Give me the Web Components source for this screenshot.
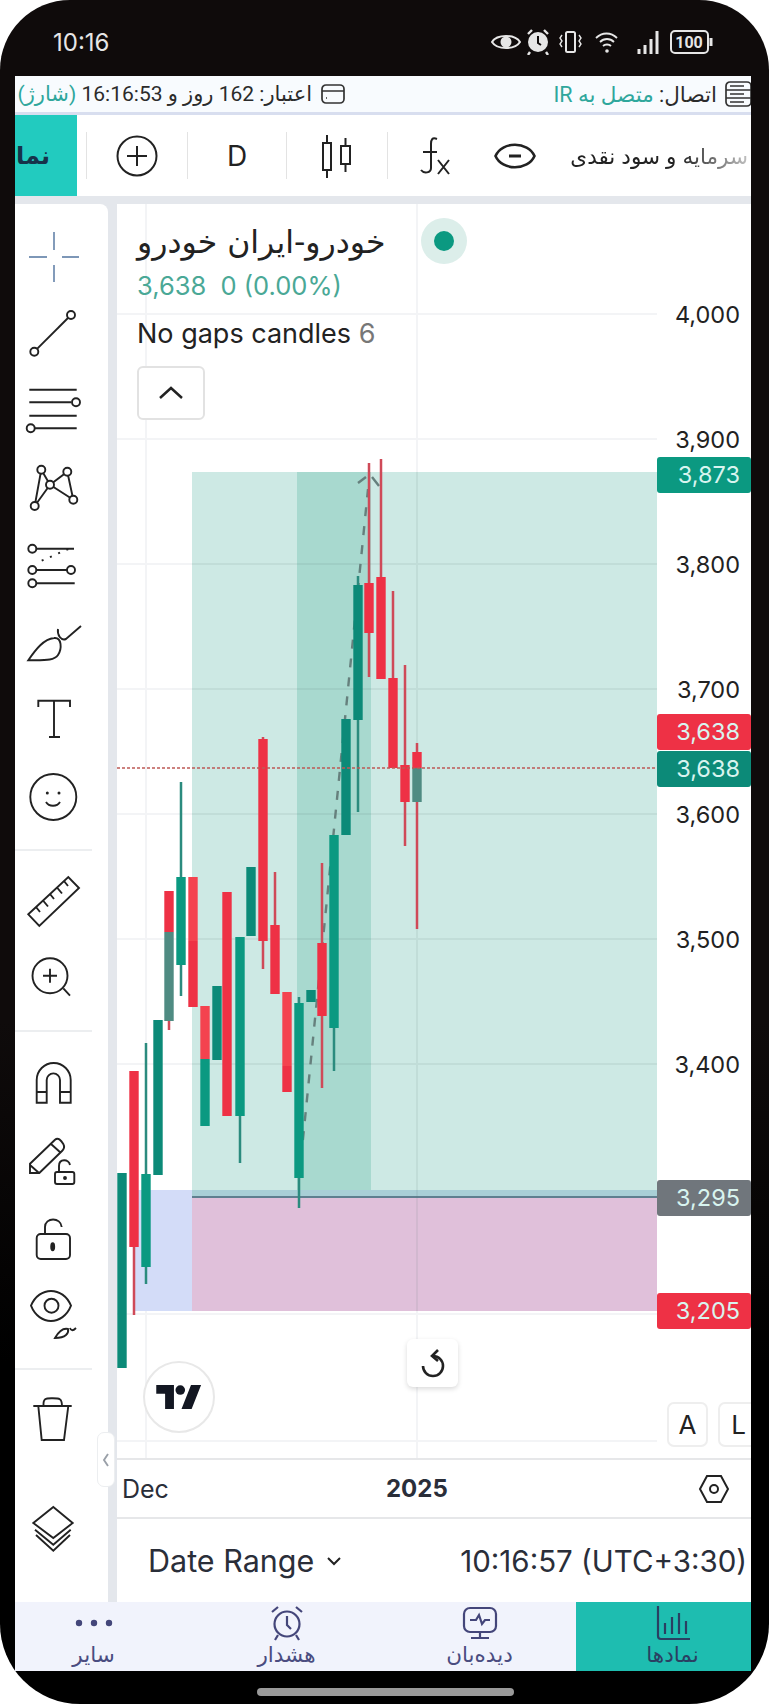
<!DOCTYPE html>
<html lang="fa">
<head>
<meta charset="utf-8">
<title>Chart</title>
<style>
	html, body { margin: 0; padding: 0; background: #fff; }
</style>
</head>
<body>
<phone-frame>
	<app-status></app-status>
	<app-toolbar></app-toolbar>
	<div style="display:flex;background:#e4e7ec;padding-top:8px;height:1406px;box-sizing:border-box">
		<draw-toolbar></draw-toolbar>
		<div style="display:flex;flex-direction:column;width:634px;margin-left:9px;background:#fff">
			<chart-pane></chart-pane>
			<time-axis></time-axis>
			<range-bar></range-bar>
		</div>
	</div>
	<bottom-nav></bottom-nav>
</phone-frame>

<script>
(function(customElements) {

	'use strict';

	const FA = '"Inter", "DejaVu Sans", sans-serif';

	class Base extends HTMLElement {
		render(html) {
			this.attachShadow({mode: 'open'}).innerHTML = html;
		}
	}

	class PhoneFrame extends Base {
		connectedCallback() {
			this.render(`
			<style>
				:host { display: block; width: 769px; height: 1704px; background: #fff; font-family: ${FA}; }
				.case { height: 100%; background: linear-gradient(#0f0b0b, #0f0b0b 60%, #000 80%); border-radius: 70px 70px 80px 80px; display: flex; flex-direction: column; overflow: hidden; }
				.top { height: 76px; flex: none; display: flex; align-items: center; justify-content: space-between; padding: 8px 54px 0 53px; box-sizing: border-box; color: #e6e6e6; font-size: 24px; }
				.icons { display: block; }
				.screen { width: 736px; height: 1595px; flex: none; margin-left: 15px; overflow: hidden; background: #fff; position: relative; }
				.bottom { flex: 1; display: flex; align-items: center; justify-content: center; }
				.pill { width: 257px; height: 8px; border-radius: 4px; background: #9a9a9a; margin-top: 9px; margin-left: 2px; }
			</style>
			<div class="case">
				<div class="top">
					<span>10:16</span>
					<svg class="icons" width="224" height="26" viewBox="0 0 224 26" fill="none" stroke="#e6e6e6" stroke-width="2">
						<path d="M1 13C6 5 24 5 29 13C24 21 6 21 1 13Z"/><circle cx="15" cy="13" r="4.5" fill="#e6e6e6"/>
						<circle cx="47" cy="13" r="10" fill="#e6e6e6" stroke="none"/><path d="M47 7v7l3 2" stroke="#0f0b0b" stroke-width="2"/><path d="M37 5l4-4M57 5l-4-4M39 23l-2 3M55 23l2 3" stroke-width="2.400"/>
						<rect x="75" y="3" width="9" height="20" rx="1.5"/><path d="M71 6l-2 3 2 3-2 3 2 3M88 6l2 3-2 3 2 3-2 3" stroke-width="1.4"/>
						<path d="M105 9c6-6 15-6 21 0M109 13c4-4 10-4 14 0M112 17c2-2 6-2 8 0" stroke-width="1.8"/><circle cx="116" cy="22" r="1.8" fill="#e6e6e6" stroke="none"/>
						<path d="M148 25v-5M154 25v-9M160 25v-15M166 25V2" stroke-width="3"/>
						<rect x="180" y="2" width="37" height="22" rx="4"/><path d="M220 9v8" stroke-width="3"/>
						<text x="198" y="19" text-anchor="middle" font-family="Roboto, sans-serif" font-size="16" font-weight="700" fill="#e6e6e6" stroke="none">100</text>
					</svg>
				</div>
				<div class="screen"><slot></slot></div>
				<div class="bottom"><div class="pill"></div></div>
			</div>`);
		}
	}

	class AppStatus extends Base {
		connectedCallback() {
			this.render(`
			<style>
				:host { display: flex; justify-content: space-between; height: 39px; box-sizing: border-box; background: #f8fbfe; border-bottom: 3px solid #d8deef; color: #2b2b2b; font-size: 21px; font-family: "Roboto", "DejaVu Sans", sans-serif; align-items: center; white-space: nowrap; }
				.left { display: flex; align-items: center; justify-content: flex-end; gap: 8px; width: 331px; overflow: hidden; }
				.right { display: flex; align-items: center; gap: 8px; }
				.t { color: #2fa79c; }
				svg { flex: none; }
			</style>
			<div class="left">
				<span dir="rtl">اعتبار: 162 روز و 16:16:53 <span class="t">(شارژ)</span></span>
				<svg width="26" height="22" viewBox="0 0 26 22" fill="none" stroke="#333" stroke-width="1.7"><rect x="2" y="2" width="22" height="18" rx="4"/><path d="M2 8h22M6 15h1"/></svg>
			</div>
			<div class="right">
				<span dir="rtl" style="font-size:21.500px">اتصال: <span class="t">متصل به IR</span></span>
				<svg width="26" height="28" viewBox="0 0 26 28" fill="none" stroke="#333" stroke-width="1.7"><rect x="1" y="2" width="25" height="24" rx="4"/><path d="M1 10h25M1 18h25M5 6h14M5 14h14M5 22h14"/></svg>
			</div>`);
		}
	}

	class AppToolbar extends Base {
		connectedCallback() {
			this.render(`
			<style>
				:host { display: flex; height: 81px; background: #fff; align-items: center; color: #222; }
				.sym { width: 62px; height: 100%; background: #22cbbf; overflow: hidden; display: flex; align-items: center; justify-content: flex-end; font-size: 24px; font-weight: 700; color: #16324a; white-space: nowrap; margin-right: 9px; padding-right: 27px; box-sizing: border-box; }
				.sym span { flex: none; }
				.cell { display: flex; align-items: center; justify-content: center; height: 47px; flex: none; }
				.sep { border-left: 1.5px solid #e3e3e3; }
				.d { font-size: 28px; }
				.txt { flex: 1; min-width: 0; overflow: hidden; font-size: 21.500px; white-space: nowrap; display: flex; justify-content: flex-end; -webkit-mask-image: linear-gradient(to left, rgba(0,0,0,.25) 0, #000 70px); mask-image: linear-gradient(to left, rgba(0,0,0,.25) 0, #000 70px); padding-right: 3px; }
			</style>
			<div class="sym"><span dir="rtl">نماد</span></div>
			<div class="cell sep" style="width:100px"><svg width="42" height="42" viewBox="0 0 42 42" fill="none" stroke="#222" stroke-width="2"><circle cx="21" cy="21" r="19.5"/><path d="M21 11v20M11 21h20"/></svg></div>
			<div class="cell sep d" style="width:98px">D</div>
			<div class="cell sep" style="width:100px"><svg width="32" height="44" viewBox="0 0 32 44" fill="none" stroke="#222" stroke-width="2"><rect x="2" y="9" width="8" height="27"/><path d="M6 1v8M6 36v8"/><rect x="20" y="12" width="9" height="18"/><path d="M24.500 4v8M24.500 30v8"/></svg></div>
			<div class="cell sep" style="width:96px"><svg width="32" height="40" viewBox="0 0 32 40" fill="none" stroke="#222" stroke-width="2"><path d="M17 3c-5-2-6 1-6 5v24c0 5-7 6-10 2M3 16h14"/><path d="M18 24l11 14M29 24L18 38"/></svg></div>
			<div class="cell" style="width:62px"><svg width="42" height="28" viewBox="0 0 42 28" fill="none" stroke="#222" stroke-width="2.600"><path d="M1.500 14C8 -1 34 -1 40.500 14C34 29 8 29 1.500 14Z"/><path d="M15 14h12" stroke-width="3"/></svg></div>
			<div class="txt"><span dir="rtl">سرمایه و سود نقدی</span></div>`);
		}
	}

	const dot = (x, y, r) => `<circle cx="${x}" cy="${y}" r="${r || 4}" fill="#fff"/>`;
	const ICONS = {
		cross: `<path stroke="#7d97b7" d="M5 30h18M38 30h17M30 5v18M30 38v17"/>`,
		line: `<path d="M10.300 48.700L47 12"/>${dot(10.3, 48.7)}${dot(47, 12)}`,
		par: `<path d="M5.300 10.700h47.400M5.300 23.300h42M5.300 36.700h47.400M11 49.300h41.700"/>${dot(52, 23.3)}${dot(6.7, 49.3)}`,
		pat: `<path d="M17.300 12.700L10.700 49M17.300 12.700L26 27.700L10.700 49M26 27.700L43.300 14.700L49.300 42.700L26 27.700"/>${dot(17.3, 12.7)}${dot(43.3, 14.7)}${dot(26, 27.7)}${dot(49.3, 42.7)}${dot(10.7, 49)}`,
		fib: `<path d="M8.300 13.700H50M8.300 35H47M8.300 48.300H50.700"/><path stroke-dasharray="2 7" d="M17.700 25.700L46 13.300"/>${dot(8.3, 13.7)}${dot(8.3, 35)}${dot(47, 35)}${dot(8.3, 48.3)}`,
		brush: `<path d="M4.300 47.300C12 36 20 26 30 25C38 24 38 36 34 42C30 48 20 47 4.300 47.300Z"/><path d="M34 16C33 22 37 28 42 26L57 13"/>`,
		text: `<path d="M14.300 19V12.700H46V19M30 12.700V49M25 49H36"/>`,
		smile: `<circle cx="29.300" cy="30" r="23"/><path d="M22 35c3 5 11 5 14 0"/><circle cx="23.300" cy="26" r="1.500" fill="#222" stroke="none"/><circle cx="35" cy="26" r="1.500" fill="#222" stroke="none"/>`,
		ruler: `<path d="M4.300 42.300L44.300 5L55 16L15.300 54Z"/><path d="M12 35l4 5M19 28.500l5 6M26 22l4 5M33 15.500l5 6M40 9l4 5"/>`,
		zoom: `<circle cx="26" cy="30.700" r="17.500"/><path d="M39.300 43.300L46 50.700M19 30.700h14M26 23.700v14"/>`,
		magnet: `<path d="M12.700 50.700V28A17 17 0 0 1 46.700 28V50.700H36V28A6.600 6.600 0 0 0 22.700 28V50.700ZM12.700 40H22.700M36 40H46.700"/>`,
		pen: `<path d="M6 31.700L31 7.700C34 5 37 8 39.300 12C41 15 40 17 38 19L15.300 41H6ZM6 33l9 8M27 12l10 9"/><rect x="31" y="40" width="19.300" height="12" rx="2"/><path d="M35 40V34C35 26 45 27 46 33"/><circle cx="41" cy="46" r="1" fill="#222"/>`,
		lock: `<rect x="12.700" y="24" width="33.300" height="25" rx="4"/><path d="M21 24V17C21 7 37 7 37.700 17"/><ellipse cx="28.700" cy="36.700" rx="1.500" ry="3.500" fill="#222"/>`,
		eye: `<path d="M7 20.700C15 1 39 1 47 20.700C39 41 15 41 7 20.700Z"/><circle cx="27.500" cy="20.700" r="7"/><path d="M31 53C35 46 40 43 44 44C45 48 42 53 31 53ZM46 43C47 46 49 46 52 43"/>`,
		trash: `<path d="M9.300 16H47.700M14.300 16L17.700 50H40L44.300 16M19.500 16C19 8 22 8.300 28 8.300C35 8.300 38 8 38 16"/>`,
		layers: `<path d="M29.300 9L48.700 25L29.300 40L9.300 25ZM11 31.700L29.300 46.700L46.700 31.700M12 37L29.300 52.700L46 37"/>`
	};

	class DrawToolbar extends Base {
		connectedCallback() {
			// [icon, row height] or [separator margin top, margin bottom]
			const rows = [
				['cross', 76], ['line', 76], ['par', 76], ['pat', 80], ['fib', 76], ['brush', 80], ['text', 70], ['smile', 88], [8, 13],
				['ruler', 76], ['zoom', 70], [20, 14],
				['magnet', 72], ['pen', 88], ['lock', 68], ['eye', 82], [12, 14],
				['trash', 72], ['layers', 144]
			];
			const html = rows.map(r => typeof r[0] === 'string'
				? `<div class="tool" style="height:${r[1]}px"><svg width="60" height="60" viewBox="0 0 60 60">${ICONS[r[0]]}</svg></div>`
				: `<div class="sep" style="margin:${r[0]}px 0 ${r[1]}px"></div>`).join('');
			this.render(`
			<style>
				:host { display: block; width: 93px; flex: none; background: #fff; border-radius: 0 8px 0 0; padding-top: 15px; box-sizing: border-box; position: relative; }
				.tool { width: 77px; display: flex; align-items: center; justify-content: center; }
				svg { fill: none; stroke: #222; stroke-width: 1.900; overflow: visible; }
				.sep { width: 77px; height: 2px; background: #eceef0; }
				.tab { position: absolute; left: 82px; top: 1228px; width: 16px; height: 53px; background: #fff; border: 1px solid #eceef0; border-radius: 7px; display: flex; align-items: center; justify-content: center; }
				.tab svg { stroke: #9aa0a8; }
			</style>
			${html}
			<div class="tab"><svg width="8" height="16" viewBox="0 0 8 16"><path d="M6 2L2 8l4 6"/></svg></div>`);
		}
	}

	// candles in page coordinates: [centre x, wick top, wick bottom, segments [from, to, colour]]
	const G = '#0b9981', D = '#0c8a78', R = '#ee3145', L = '#f4434f', M = '#4f8b82';
	const CANDLES = [
		[122, 0, 0, [[1174, 1369, D]]],
		[134, 0, 1316, [[1072, 1248, R]]],
		[146, 1044, 1285, [[1175, 1268, G]]],
		[158, 0, 0, [[1021, 1176, D]]],
		[169, 0, 1031, [[892, 933, R], [933, 1022, M]]],
		[181, 783, 997, [[878, 966, G]]],
		[193, 0, 0, [[878, 942, L], [942, 1008, R]]],
		[205, 0, 0, [[1007, 1060, L], [1060, 1127, G]]],
		[217, 0, 0, [[987, 1061, D]]],
		[227, 0, 0, [[893, 1117, R]]],
		[240, 0, 1164, [[938, 1117, G]]],
		[251, 0, 0, [[868, 937, D]]],
		[263, 738, 970, [[740, 942, R]]],
		[275, 873, 0, [[926, 995, R]]],
		[287, 0, 0, [[993, 1067, L], [1067, 1093, R]]],
		[299, 998, 1209, [[1004, 1179, G]]],
		[311, 0, 0, [[991, 1003, D]]],
		[322, 864, 1089, [[944, 1017, R]]],
		[334, 0, 1072, [[836, 1029, G]]],
		[346, 0, 0, [[720, 836, D]]],
		[358, 577, 813, [[586, 721, D]]],
		[369, 464, 678, [[584, 634, R]]],
		[381, 460, 0, [[578, 680, R]]],
		[393, 592, 0, [[679, 769, R]]],
		[405, 666, 847, [[766, 803, R]]],
		[417, 744, 930, [[753, 769, R], [769, 803, M]]]
	];

	class ChartPane extends Base {
		connectedCallback() {
			let bars = '';
			CANDLES.forEach(c => {
				const first = c[3][0], last = c[3][c[3].length - 1];
				const wick = first[2] === R || first[2] === L ? '#cf4a58' : '#2b8b7e';
				if (c[1]) bars += `<rect x="${c[0] - 1.25}" y="${c[1]}" width="2.500" height="${first[0] - c[1]}" fill="${wick}"/>`;
				if (c[2]) bars += `<rect x="${c[0] - 1.25}" y="${last[1]}" width="2.500" height="${c[2] - last[1]}" fill="${wick}"/>`;
				c[3].forEach(s => { bars += `<rect x="${c[0] - 4.7}" y="${s[0]}" width="9.400" height="${s[1] - s[0]}" fill="${s[2]}"/>`; });
			});
			const grid = [315, 440, 565, 690, 815, 940, 1065, 1315, 1442].map(y => `<path d="M117 ${y}H657"/>`).join('');
			const ticks = [4000, 3900, 3800, 3700, 3600, 3500, 3400]
				.map(p => `<div class="scale" style="top:${(4000 - p) * 1.25 + 110 - 17}px">${p.toLocaleString('en-US')}</div>`).join('');
			const tag = (t, top, c) => `<div class="tag" style="top:${top}px;background:${c}">${t}</div>`;
			this.render(`
			<style>
				:host { display: block; height: 1254px; flex: none; position: relative; overflow: hidden; background: #fff; border-radius: 8px 0 0 0; }
				svg.plot { display: block; }
				.axis { position: absolute; left: 540px; top: 0; bottom: 0; width: 94px; background: #fff; font-size: 23.500px; color: #222; }
				.scale, .tag { position: absolute; left: 0; width: 94px; height: 36px; line-height: 36px; text-align: right; padding-right: 11px; box-sizing: border-box; }
				.tag { color: #d8f4ef; border-radius: 3px; }
				.legend { position: absolute; left: 20px; top: 15px; display: flex; flex-direction: column; align-items: flex-start; }
				.title { display: flex; align-items: center; gap: 35px; font-size: 31.500px; color: #222; height: 46px; white-space: nowrap; }
				.halo { width: 46px; height: 46px; border-radius: 50%; background: #dceeea; display: flex; align-items: center; justify-content: center; position: relative; top: -1px; }
				.halo i { width: 20px; height: 20px; border-radius: 50%; background: #0b9981; }
				.val { font-size: 25.500px; line-height: 36px; color: #4aa896; margin-top: 3px; white-space: pre; }
				.study { font-size: 27px; line-height: 36px; color: #222; margin-top: 12px; }
				.study span { color: #777; }
				.chev { width: 68px; height: 54px; margin-top: 14px; border: 2px solid #e2e2e2; border-radius: 6px; box-sizing: border-box; display: flex; align-items: center; justify-content: center; background: #fff; }
				.logo { position: absolute; left: 26px; top: 1157px; width: 72px; height: 72px; border-radius: 50%; border: 2px solid #e8e8e8; background: #fff; box-sizing: border-box; display: flex; align-items: center; justify-content: center; }
				.reset { position: absolute; left: 290px; top: 1135px; width: 51px; height: 48px; border-radius: 6px; background: #fff; box-shadow: 0 2px 5px rgba(0,0,0,.15); display: flex; align-items: center; justify-content: center; }
				.ab { position: absolute; top: 1198px; height: 45px; width: 41px; border: 2px solid #eeeeee; border-radius: 7px; box-sizing: border-box; background: #fff; text-align: center; line-height: 41px; font-size: 26px; color: #222; }
			</style>
			<svg class="plot" width="634" height="1254" viewBox="117 205 634 1254">
				<g stroke="#f3f4f6" stroke-width="2" fill="none">${grid}<path d="M146 205V1459M417 205V1459"/></g>
				<rect x="135" y="1191" width="57" height="121" fill="#d3dcf8"/>
				<rect x="192" y="473" width="465" height="718" fill="#cde9e4"/>
				<rect x="297" y="473" width="74" height="718" fill="#a8d9cf"/>
				<rect x="192" y="1191" width="465" height="7" fill="#a9cfd6"/>
				<rect x="192" y="1198" width="465" height="114" fill="#e0c0da"/>
				<path d="M192 1198H657" stroke="#5f7f8f" stroke-width="2"/>
				<g stroke="rgba(90,120,120,.10)" stroke-width="2" fill="none"><path d="M192 565H657M192 690H657M192 815H657M192 940H657M192 1065H657M417 473V1312"/></g>
				<path d="M301 1160L368 490" fill="none" stroke="#66807d" stroke-width="2.400" stroke-dasharray="9 10"/>
				<path d="M358 484L366 478M372 478L379 487" fill="none" stroke="#66807d" stroke-width="2.400"/>
				${bars}
				<path d="M117 769H657" stroke="#bd5a55" stroke-width="1.600" stroke-dasharray="3 2"/>
			</svg>
			<div class="legend">
				<div class="title"><span dir="rtl" style="font-family:'DejaVu Sans',sans-serif">خودرو-ایران خودرو</span><div class="halo"><i></i></div></div>
				<div class="val">3,638  0 (0.00%)</div>
				<div class="study">No gaps candles <span>6</span></div>
				<div class="chev"><svg width="26" height="14" viewBox="0 0 26 14" fill="none" stroke="#222" stroke-width="2.500"><path d="M2 12L13 2L24 12"/></svg></div>
			</div>
			<div class="logo"><svg width="46" height="24" viewBox="0 0 36 19"><path fill="#131722" d="M14 19H7V7H0V0h14v19zM28 19h-8L27.500 0h8L28 19z"/><circle cx="19" cy="4" r="3.800" fill="#131722"/></svg></div>
			<div class="reset"><svg width="26" height="30" viewBox="0 0 26 30" fill="none" stroke="#222" stroke-width="2.600"><path d="M3 18a10 10 0 1 0 10-10"/><path d="M18 2L12 8l6 5"/></svg></div>
			<div class="axis">${ticks}${tag('3,873', 253, '#0b9981')}${tag('3,638', 510, '#ee3145')}${tag('3,638', 547, '#0c8a78')}${tag('3,295', 976, '#70767c')}${tag('3,205', 1089, '#ee3145')}</div>
			<div class="ab" style="left:550px">A</div>
			<div class="ab" style="left:601px">L</div>`);
		}
	}

	class TimeAxis extends Base {
		connectedCallback() {
			this.render(`
			<style>
				:host { display: flex; align-items: center; height: 61px; box-sizing: border-box; border-top: 2px solid #e6e7e9; border-bottom: 2px solid #e6e7e9; font-size: 24px; color: #2a2e39; flex: none; padding: 0 21px 0 5px; }
				.y { font-weight: 700; margin-left: 216px; flex: 1; }
				.d { font-size: 25px; width: 48px; }
			</style>
			<span class="d">Dec</span><span class="y">2025</span>
			<svg width="32" height="30" viewBox="0 0 32 30" fill="none" stroke="#222" stroke-width="2"><path d="M9 2H23L30 15L23 28H9L2 15Z"/><circle cx="16" cy="15" r="4"/></svg>`);
		}
	}

	class RangeBar extends Base {
		connectedCallback() {
			this.render(`
			<style>
				:host { display: flex; align-items: center; justify-content: space-between; flex: 1; color: #2a2e39; padding: 0 4px 0 31px; white-space: nowrap; }
				.r { display: flex; align-items: center; gap: 12px; font-size: 30.500px; }
				.t { font-size: 29.500px; }
			</style>
			<div class="r">Date Range <svg width="16" height="10" viewBox="0 0 16 10" fill="none" stroke="#222" stroke-width="2"><path d="M2 2l6 6 6-6"/></svg></div>
			<div class="t">10:16:57 (UTC+3:30)</div>`);
		}
	}

	class BottomNav extends Base {
		connectedCallback() {
			const c = 'fill="none" stroke="#44467a" stroke-width="2.200"';
			this.render(`
			<style>
				:host { display: grid; grid-template-columns: repeat(4, 193px); width: 772px; height: 69px; margin-left: -18px; background: #f1f3fc; color: #4a4c80; font-size: 21.500px; font-family: "Roboto", "DejaVu Sans", sans-serif; }
				.tab { display: flex; flex-direction: column; align-items: center; justify-content: flex-start; padding-top: 3px; box-sizing: border-box; }
				.tab.on { background: #1ebdb0; color: #2a3f62; }
				.ic { height: 36px; display: flex; align-items: center; }
				span { line-height: 24px; margin-top: 2px; }
			</style>
			<div class="tab"><div class="ic"><svg width="38" height="10" viewBox="0 0 38 10" fill="#44467a"><circle cx="4" cy="5" r="3.200"/><circle cx="19" cy="5" r="3.200"/><circle cx="34" cy="5" r="3.200"/></svg></div><span dir="rtl">سایر</span></div>
			<div class="tab"><div class="ic"><svg width="36" height="36" viewBox="0 0 36 36" ${c}><circle cx="18" cy="19" r="12.500"/><path d="M18 11v9l4 4M3 7l6-5M33 7l-6-5M9 30l-3 5M27 30l3 5"/></svg></div><span dir="rtl">هشدار</span></div>
			<div class="tab"><div class="ic"><svg width="36" height="34" viewBox="0 0 36 34" ${c}><rect x="2" y="2" width="32" height="24" rx="6"/><path d="M8 14h6l3-5 3 9 3-4h5M18 26v6M9 32h18"/></svg></div><span dir="rtl">دیده‌بان</span></div>
			<div class="tab on"><div class="ic"><svg width="36" height="36" viewBox="0 0 36 36" fill="none" stroke="#2a3f62" stroke-width="2.200"><path d="M3 1v30c0 2 1 3 3 3h29M10 18v11M17 12v17M24 8v21M31 16v13"/></svg></div><span dir="rtl">نمادها</span></div>`);
		}
	}

	customElements.define('phone-frame', PhoneFrame);
	customElements.define('app-status', AppStatus);
	customElements.define('app-toolbar', AppToolbar);
	customElements.define('draw-toolbar', DrawToolbar);
	customElements.define('chart-pane', ChartPane);
	customElements.define('time-axis', TimeAxis);
	customElements.define('range-bar', RangeBar);
	customElements.define('bottom-nav', BottomNav);

})(window.customElements);
</script>
</body>
</html>
